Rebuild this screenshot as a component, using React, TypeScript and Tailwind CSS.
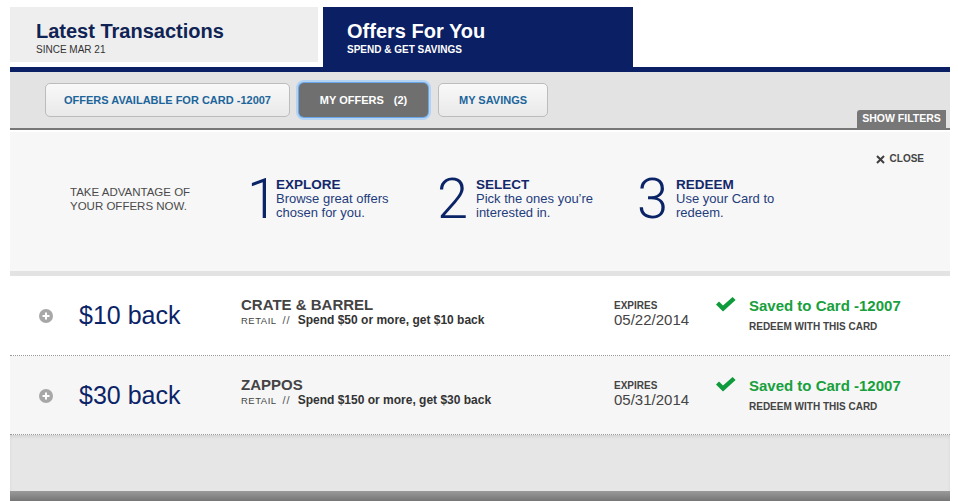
import React from "react";

type Offer = {
  amount: string;
  merchant: string;
  category: string;
  terms: string;
  expires: string;
  card: string;
  shaded: boolean;
};

const offers: Offer[] = [
  {
    amount: "$10 back",
    merchant: "CRATE & BARREL",
    category: "RETAIL",
    terms: "Spend $50 or more, get $10 back",
    expires: "05/22/2014",
    card: "-12007",
    shaded: false,
  },
  {
    amount: "$30 back",
    merchant: "ZAPPOS",
    category: "RETAIL",
    terms: "Spend $150 or more, get $30 back",
    expires: "05/31/2014",
    card: "-12007",
    shaded: true,
  },
];

const steps = [
  { n: "1", title: "EXPLORE", lines: ["Browse great offers", "chosen for you."], w: "w-[190px]", d: "w-[29px]" },
  { n: "2", title: "SELECT", lines: ["Pick the ones you\u2019re", "interested in."], w: "w-[200px]", d: "w-[39px]" },
  { n: "3", title: "REDEEM", lines: ["Use your Card to", "redeem."], w: "w-[200px]", d: "w-[39px]" },
];

function PlusCircle() {
  return (
    <svg width="14" height="14" viewBox="0 0 14 14">
      <circle cx="7" cy="7" r="7" fill="#a7a7a7" />
      <path d="M3.5 7h7M7 3.5v7" stroke="#ffffff" strokeWidth="2" />
    </svg>
  );
}

function Check() {
  return (
    <svg width="20" height="15" viewBox="0 0 20 15">
      <path d="M0 7.6L3 4.6L7 8.4L16.6 0L19.6 3L7 14.6Z" fill="#0f9a3c" />
    </svg>
  );
}

function CloseX() {
  return (
    <svg width="9" height="9" viewBox="0 0 9 9">
      <path d="M1 1L8 8M8 1L1 8" stroke="#3f3f3f" strokeWidth="2" />
    </svg>
  );
}

function OfferRow({ o }: { o: Offer }) {
  return (
    <div
      className={`flex items-start border-b border-dotted border-[#9a9a9a] ${
        o.shaded ? "h-[79px] bg-[#f6f6f6]" : "h-[80px] bg-white"
      }`}
    >
      <div className="ml-[29px] mt-[33px] w-[14px]">
        <PlusCircle />
      </div>
      <div className="ml-[26px] mt-[25px] w-[162px] text-[25px] leading-[28px] text-[#0b2467]">
        {o.amount}
      </div>
      <div className="mt-[22px] w-[373px]">
        <div className="text-[15px] font-bold leading-[14px] text-[#444444]">{o.merchant}</div>
        <div className="mt-px flex items-baseline leading-[14px]">
          <span className="text-[9.5px] tracking-[0.5px] text-[#444444]">{o.category}</span>
          <span className="ml-[6px] text-[11px] tracking-[1px] text-[#555555]">//</span>
          <span className="ml-[7px] text-[12px] font-bold text-[#333333]">{o.terms}</span>
        </div>
      </div>
      <div className="mt-[24px] w-[102px]">
        <div className="text-[10px] font-bold leading-[12px] text-[#444444]">EXPIRES</div>
        <div className="text-[15px] leading-[16px] text-[#444444]">{o.expires}</div>
      </div>
      <div className="mt-[21px] w-[33px]">
        <Check />
      </div>
      <div className="mt-[22px] flex-1">
        <div className="text-[15px] font-bold leading-[16px] text-[#17a03c]">Saved to Card {o.card}</div>
        <div className="mt-[7px] text-[10px] font-bold leading-[12px] text-[#444444]">
          REDEEM WITH THIS CARD
        </div>
      </div>
    </div>
  );
}

export default function App() {
  return (
    <div className="h-[501px] w-[958px] overflow-hidden bg-white px-[10px] pt-[7px] font-['Liberation_Sans',Arial,sans-serif]">
      <div className="w-[940px]">
        {/* section tabs */}
        <div className="flex h-[60px] items-start">
          <div className="h-[55px] w-[308px] bg-[#eeeeee] pl-[26px] pt-[13px]">
            <div className="text-[20px] font-bold leading-[22px] text-[#0f2354]">Latest Transactions</div>
            <div className="mt-[2px] text-[10px] leading-[12px] text-[#333333]">SINCE MAR 21</div>
          </div>
          <div className="ml-[5px] h-[60px] w-[310px] bg-[#0a1f64] pl-[24px] pt-[13px]">
            <div className="text-[20px] font-bold leading-[22px] text-white">Offers For You</div>
            <div className="mt-[2px] text-[10px] font-bold leading-[12px] text-white">SPEND &amp; GET SAVINGS</div>
          </div>
        </div>
        <div className="h-[5px] bg-[#0a1f64]" />

        {/* offer filter toolbar */}
        <div className="flex h-[58px] items-start border-b-2 border-[#777777] bg-[#e3e3e3] pl-[35px]">
          <button className="mt-[11px] flex h-[34px] w-[245px] items-center justify-center rounded-[5px] border border-[#bcbcbc] bg-gradient-to-b from-[#f9f9f9] to-[#e9e9e9] text-[11px] font-bold text-[#1b659b]">
            OFFERS AVAILABLE FOR CARD -12007
          </button>
          <button className="ml-[9px] mt-[11px] flex h-[34px] w-[129px] items-center justify-center rounded-[5px] bg-[#6f6f6f] text-[11px] font-bold text-white shadow-[0_0_0_1px_#6aa6ea,0_0_0_3px_#b4d3f3]">
            MY OFFERS<span className="ml-[10px]">(2)</span>
          </button>
          <button className="ml-[10px] mt-[11px] flex h-[34px] w-[110px] items-center justify-center rounded-[5px] border border-[#bcbcbc] bg-gradient-to-b from-[#f9f9f9] to-[#e9e9e9] text-[11px] font-bold text-[#1b659b]">
            MY SAVINGS
          </button>
          <div className="ml-auto mr-[4px] flex h-[18px] w-[89px] items-center justify-center self-end rounded-tl-[3px] bg-[#777777] text-[10.5px] font-bold text-white">
            SHOW FILTERS
          </div>
        </div>

        {/* how it works panel */}
        <div className="mt-[2px] flex h-[139px] items-start bg-[#f7f7f7]">
          <div className="mt-[53px] w-[237px] pl-[60px] text-[11.5px] leading-[14px] text-[#4a4a4a]">
            <div>TAKE ADVANTAGE OF</div>
            <div>YOUR OFFERS NOW.</div>
          </div>
          {steps.map((s) => (
            <div key={s.n} className={`flex items-start ${s.w}`}>
              <div className={`mt-[39px] ${s.d} font-['Roboto',sans-serif] text-[56px] font-light leading-[56px] text-[#0b2467]`}>
                {s.n}
              </div>
              <div className="mt-[45px]">
                <div className="text-[13.5px] font-bold leading-[15px] text-[#13286b]">{s.title}</div>
                {s.lines.map((l) => (
                  <div key={l} className="text-[13px] leading-[13.5px] text-[#1f3c7c]">
                    {l}
                  </div>
                ))}
              </div>
            </div>
          ))}
          <div className="ml-auto mr-[26px] mt-[21px] flex items-center">
            <CloseX />
            <span className="ml-[5px] text-[10px] font-bold leading-[12px] text-[#444444]">CLOSE</span>
          </div>
        </div>
        <div className="h-[5px] bg-[#e3e3e3]" />

        {/* saved offers */}
        {offers.map((o) => (
          <OfferRow key={o.merchant} o={o} />
        ))}
        <div className="h-[56px] bg-[#e6e6e6] shadow-[inset_0_2px_3px_rgba(0,0,0,0.08)]" />
        <div className="h-[10px] bg-gradient-to-b from-[#9a9a9a] to-[#767676]" />
      </div>
    </div>
  );
}
